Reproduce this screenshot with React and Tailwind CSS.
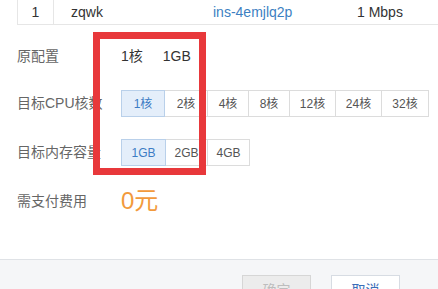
const font = {
  fontFamily: '"Liberation Sans", "Noto Sans CJK SC", sans-serif',
};

const cpu_options = [
  { label: "1核", width: "w-[44px]", selected: true },
  { label: "2核", width: "w-[44px]" },
  { label: "4核", width: "w-[42px]" },
  { label: "8核", width: "w-[42px]" },
  { label: "12核", width: "w-[47px]" },
  { label: "24核", width: "w-[47px]" },
  { label: "32核", width: "w-[48px]" },
];

const mem_options = [
  { label: "1GB", width: "w-[45px]", selected: true },
  { label: "2GB", width: "w-[43px]" },
  { label: "4GB", width: "w-[43px]" },
];

function OptionGroup({ options }) {
  return (
    <div className="flex">
      {options.map((opt, i) => (
        <div
          key={opt.label}
          className={[
            "h-[27px] flex items-center justify-center border text-[12px]",
            opt.width,
            i > 0 ? "-ml-px" : "",
            opt.selected
              ? "relative z-10 bg-[#e4eefa] border-[#b9d0ea] text-[#3d7cc4]"
              : "bg-white border-[#dcdcdc] text-[#555]",
          ].join(" ")}
        >
          {opt.label}
        </div>
      ))}
    </div>
  );
}

function FormRow({ label, children, className }) {
  return (
    <div className={"flex items-center pl-[17px] " + (className ?? "")}>
      <div className="w-[104px] text-[14px] text-[#666] whitespace-nowrap overflow-hidden">
        {label}
      </div>
      {children}
    </div>
  );
}

export default function App() {
  return (
    <div
      className="relative w-[438px] h-[289px] bg-white overflow-hidden"
      style={font}
    >
      {/* table row, cut off at the top */}
      <div className="ml-[17px] h-[25px] flex items-center border-l border-b border-[#e6e6e6] text-[14px] text-[#333]">
        <div className="w-[36px] h-full flex items-center justify-center border-r border-[#e6e6e6]">
          1
        </div>
        <div className="w-[159px] pl-[17px]">zqwk</div>
        <div className="w-[144px] text-[#3c7fc2]">ins-4emjlq2p</div>
        <div>1 Mbps</div>
      </div>

      <FormRow label="原配置" className="mt-[18px] h-[26px]">
        <div className="flex gap-[20px] text-[14px] text-[#333]">
          <span>1核</span>
          <span>1GB</span>
        </div>
      </FormRow>

      <FormRow label="目标CPU核数" className="mt-[21px]">
        <OptionGroup options={cpu_options} />
      </FormRow>

      <FormRow label="目标内存容量" className="mt-[22px]">
        <OptionGroup options={mem_options} />
      </FormRow>

      <FormRow label="需支付费用" className="mt-[21px] h-[28px]">
        <span className="text-[24px] leading-none text-[#f29a3c]">0元</span>
      </FormRow>

      {/* footer */}
      <div className="mt-[44px] h-[40px] border-t border-[#dfe2e6] bg-[#f5f6f8] flex justify-end gap-[20px] pr-[38px] pt-[15px]">
        <div className="w-[69px] h-[30px] border border-[#d6d6d6] bg-[#ececec] text-[#bdbdbd] text-[14px] flex items-center justify-center">
          确定
        </div>
        <div className="w-[69px] h-[30px] border border-[#d7dce3] bg-white text-[#3a6db8] text-[14px] flex items-center justify-center">
          取消
        </div>
      </div>

      {/* red annotation box */}
      <div className="absolute left-[93px] top-[32px] w-[113px] h-[143px] border-[7px] border-[#e8383b]" />
    </div>
  );
}
